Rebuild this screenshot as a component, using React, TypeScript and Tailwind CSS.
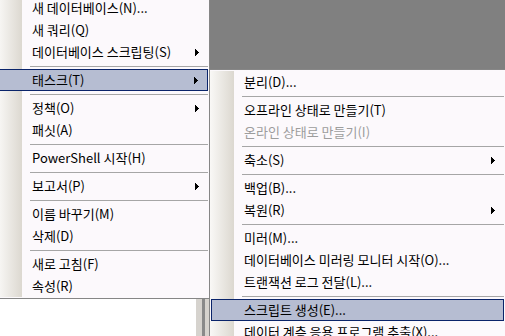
import React from "react";

type Entry =
  | { kind: "item"; label: string; sub?: boolean; disabled?: boolean; active?: boolean }
  | { kind: "sep" };

const item = (label: string, opts: { sub?: boolean; disabled?: boolean; active?: boolean } = {}): Entry => ({
  kind: "item",
  label,
  ...opts,
});
const sep: Entry = { kind: "sep" };

const mainMenu: Entry[] = [
  item("새 데이터베이스(N)..."),
  item("새 쿼리(Q)"),
  item("데이터베이스 스크립팅(S)", { sub: true }),
  sep,
  item("태스크(T)", { sub: true, active: true }),
  sep,
  item("정책(O)", { sub: true }),
  item("패싯(A)"),
  sep,
  item("PowerShell 시작(H)"),
  sep,
  item("보고서(P)", { sub: true }),
  sep,
  item("이름 바꾸기(M)"),
  item("삭제(D)"),
  sep,
  item("새로 고침(F)"),
  item("속성(R)"),
];

const taskMenu: Entry[] = [
  item("분리(D)..."),
  sep,
  item("오프라인 상태로 만들기(T)"),
  item("온라인 상태로 만들기(I)", { disabled: true }),
  sep,
  item("축소(S)", { sub: true }),
  sep,
  item("백업(B)..."),
  item("복원(R)", { sub: true }),
  sep,
  item("미러(M)..."),
  item("데이터베이스 미러링 모니터 시작(O)..."),
  item("트랜잭션 로그 전달(L)..."),
  sep,
  item("스크립트 생성(E)...", { active: true }),
  item("데이터 계층 응용 프로그램 추출(X)..."),
];

// 작은 검은 삼각형 (하위 메뉴 표시)
function Arrow() {
  return (
    <svg width="4" height="7" viewBox="0 0 4 7" shapeRendering="crispEdges" className="mt-[2px] shrink-0">
      <path d="M0 0h1v7H0z M1 1h1v5H1z M2 2h1v3H2z M3 3h1v1H3z" fill="#000" />
    </svg>
  );
}

function Strip() {
  return <div className="w-[24px] shrink-0 bg-gradient-to-r from-[#f9f8f6] to-[#dcd8d0]" />;
}

function MenuRow({ entry }: { entry: Entry }) {
  if (entry.kind === "sep") {
    return (
      <div className="flex h-[6px]">
        <Strip />
        <div className="flex flex-1 items-center pl-[8px] pr-[1px]">
          <div className="h-px flex-1 bg-[#a6a6a6]" />
        </div>
      </div>
    );
  }

  if (entry.active) {
    return (
      <div className="flex h-[22px] px-[1px]">
        <div className="flex flex-1 items-center border border-[#0a246a] bg-[#b6bdd2] pb-[2px] pl-[32px] pr-[9px]">
          <span className="flex-1 whitespace-nowrap">{entry.label}</span>
          {entry.sub && <Arrow />}
        </div>
      </div>
    );
  }

  return (
    <div className="flex h-[22px]">
      <Strip />
      <div className="flex flex-1 items-center pb-[2px] pl-[10px] pr-[10px]">
        <span className={`flex-1 whitespace-nowrap ${entry.disabled ? "text-[#9d9d9d]" : "text-black"}`}>
          {entry.label}
        </span>
        {entry.sub && <Arrow />}
      </div>
    </div>
  );
}

function Menu({ entries, className }: { entries: Entry[]; className: string }) {
  return (
    <div className={`absolute flex flex-col border border-[#868686] bg-[#fcf9fc] ${className}`}>
      {entries.map((e, i) => (
        <MenuRow key={i} entry={e} />
      ))}
    </div>
  );
}

export default function App() {
  return (
    <div className="relative h-[336px] w-[505px] overflow-hidden bg-white font-['Noto_Sans_CJK_KR',sans-serif] text-[13px] leading-none text-black">
      {/* 뒤쪽 창 배경 */}
      <div className="flex h-full flex-col">
        <div className="h-[69px] bg-[#808080]" />
        <div className="flex flex-1">
          <div className="w-[196px] bg-white" />
          <div className="w-[6px] bg-[#d6d3ce]" />
          <div className="w-[3px] bg-[#8a8a8a]" />
          <div className="w-[4px] bg-[#d6d3ce]" />
          <div className="flex-1 bg-white" />
        </div>
      </div>

      <Menu entries={mainMenu} className="left-[-3px] top-[-4px] w-[213px] pb-[1px]" />
      <Menu entries={taskMenu} className="left-[209px] top-[69px] w-[297px] pt-[1px]" />
    </div>
  );
}
